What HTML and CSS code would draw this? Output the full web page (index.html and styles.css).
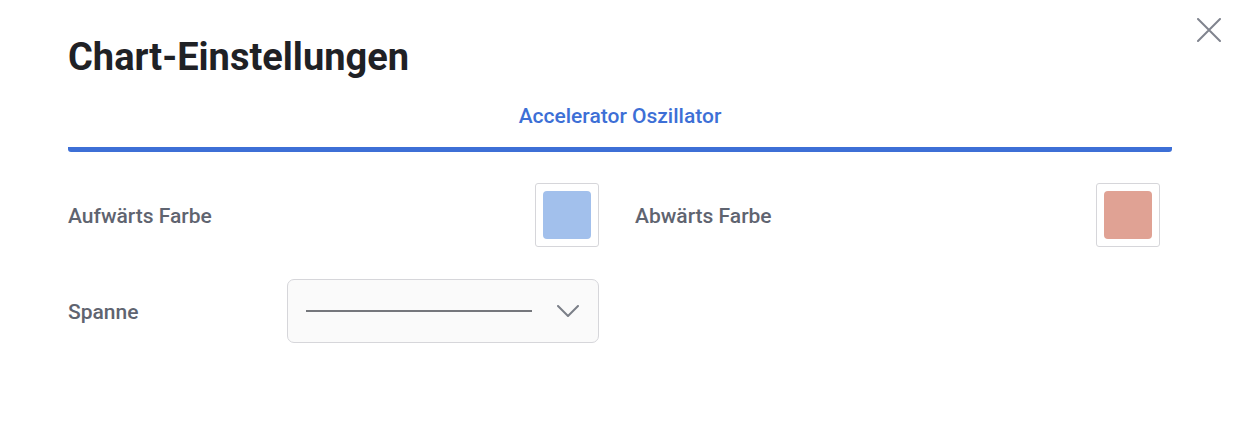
FILE: index.html
```html
<!DOCTYPE html>
<html lang="de">
<head>
<meta charset="utf-8">
<title>Chart-Einstellungen</title>
<link rel="stylesheet" href="styles.css">
</head>
<body>
<div class="dialog">
  <button class="close" aria-label="Schließen">
    <svg width="24" height="24" viewBox="0 0 24 24"><path d="M1 1 L23 23 M23 1 L1 23" stroke="#80848e" stroke-width="2" stroke-linecap="round" fill="none"/></svg>
  </button>
  <h1 class="title">Chart-Einstellungen</h1>
  <div class="tabs">
    <div class="tab active">Accelerator Oszillator</div>
  </div>
  <div class="settings">
    <div class="field">
      <span class="label">Aufwärts Farbe</span>
      <button class="swatch"><span class="swatch-color up"></span></button>
    </div>
    <div class="field">
      <span class="label">Abwärts Farbe</span>
      <button class="swatch"><span class="swatch-color down"></span></button>
    </div>
    <div class="field field-select">
      <span class="label label-wide">Spanne</span>
      <div class="select">
        <span class="line-preview"></span>
        <svg class="chevron" width="22" height="12" viewBox="0 0 22 12"><polyline points="1,1 11,11 21,1" stroke="#7b7f88" stroke-width="2" fill="none" stroke-linecap="round" stroke-linejoin="round"/></svg>
      </div>
    </div>
  </div>
</div>
</body>
</html>
```
FILE: styles.css
```css
* { box-sizing: border-box; }
html, body { margin: 0; padding: 0; background: #ffffff; }
body {
  font-family: Roboto, "Liberation Sans", Arial, sans-serif;
  width: 1240px;
  height: 422px;
  overflow: hidden;
}
.dialog {
  position: relative;
  padding: 0 68px;
  height: 422px;
}
.close {
  position: absolute;
  top: 18px;
  right: 19px;
  width: 24px;
  height: 24px;
  padding: 0;
  border: 0;
  background: none;
  display: flex;
}
.title {
  margin: 0;
  padding-top: 35px;
  font-size: 38px;
  line-height: 44px;
  font-weight: 700;
  color: #1f2125;
}
.tabs {
  margin-top: 25px;
  display: flex;
  justify-content: center;
  border-bottom: 5px solid #3d6fd6;
  border-radius: 3px;
}
.tab {
  font-size: 21px;
  line-height: 24px;
  font-weight: 500;
  color: #3d6fd6;
  padding-bottom: 19px;
}
.settings {
  margin-top: 31px;
  display: grid;
  grid-template-columns: 531px 525px;
  column-gap: 36px;
  row-gap: 32px;
}
.field {
  display: flex;
  align-items: center;
  justify-content: space-between;
  height: 64px;
}
.label {
  font-size: 21px;
  font-weight: 500;
  color: #5f6470;
  padding-top: 2px;
}
.label-wide { width: 219px; }
.swatch {
  width: 64px;
  height: 64px;
  padding: 7px;
  border: 1px solid #d6d6da;
  border-radius: 3px;
  background: #ffffff;
  display: flex;
}
.swatch-color {
  flex: 1;
  border-radius: 4px;
}
.swatch-color.up { background: #a2c0ec; }
.swatch-color.down { background: #e0a294; }
.select {
  width: 312px;
  height: 64px;
  border: 1px solid #d6d6da;
  border-radius: 7px;
  background: #fafafa;
  display: flex;
  align-items: center;
  padding: 0 19px 0 18px;
}
.line-preview {
  width: 226px;
  height: 2px;
  background: #75777c;
}
.chevron { margin-left: auto; }
```
